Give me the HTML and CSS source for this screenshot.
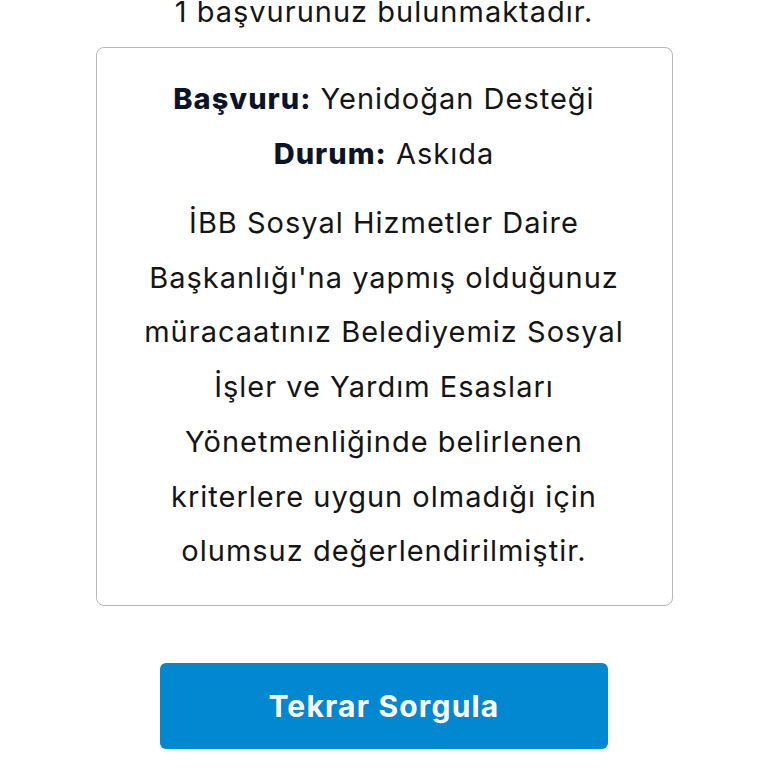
FILE: index.html
```html
<!DOCTYPE html>
<html lang="tr">
<head>
<meta charset="utf-8">
<link rel="stylesheet" href="styles.css">
</head>
<body>
<main class="page">
  <p class="intro">1 başvurunuz bulunmaktadır.</p>
  <section class="card">
    <p class="row"><strong>Başvuru:</strong> Yenidoğan Desteği</p>
    <p class="row"><strong>Durum:</strong> Askıda</p>
    <p class="message">İBB Sosyal Hizmetler Daire<br>Başkanlığı'na yapmış olduğunuz<br>müracaatınız Belediyemiz Sosyal<br>İşler ve Yardım Esasları<br>Yönetmenliğinde belirlenen<br>kriterlere uygun olmadığı için<br>olumsuz değerlendirilmiştir.</p>
  </section>
  <button class="retry" type="button">Tekrar Sorgula</button>
</main>
</body>
</html>
```
FILE: styles.css
```css
html, body {
  margin: 0;
  padding: 0;
  background: #ffffff;
}
body {
  font-family: Inter, "Open Sans", "DejaVu Sans", sans-serif;
  color: #151515;
  height: 768px;
  overflow: hidden;
}
.page {
  display: flex;
  flex-direction: column;
  align-items: center;
}
.intro {
  margin: -8px 0 0 0;
  font-size: 29px;
  letter-spacing: 1px;
  line-height: 40px;
  text-align: center;
}
.card {
  box-sizing: border-box;
  width: 577px;
  margin-top: 15px;
  border: 1.5px solid #b9b9b9;
  border-radius: 8px;
  padding: 23px 10px 26px;
  text-align: center;
}
.row {
  margin: 0;
  font-size: 29px;
  letter-spacing: 1px;
  line-height: 55px;
}
.row strong {
  color: #0d1428;
  font-weight: 800;
}
.message {
  margin: 15px 0 0 0;
  font-size: 29px;
  letter-spacing: 1px;
  line-height: 54.7px;
}
.retry {
  margin-top: 57px;
  width: 448px;
  height: 86px;
  border: none;
  border-radius: 6px;
  background: #0288d1;
  color: #ffffff;
  font-family: inherit;
  font-size: 30px;
  letter-spacing: 1.2px;
  font-weight: 700;
  cursor: pointer;
}
```
